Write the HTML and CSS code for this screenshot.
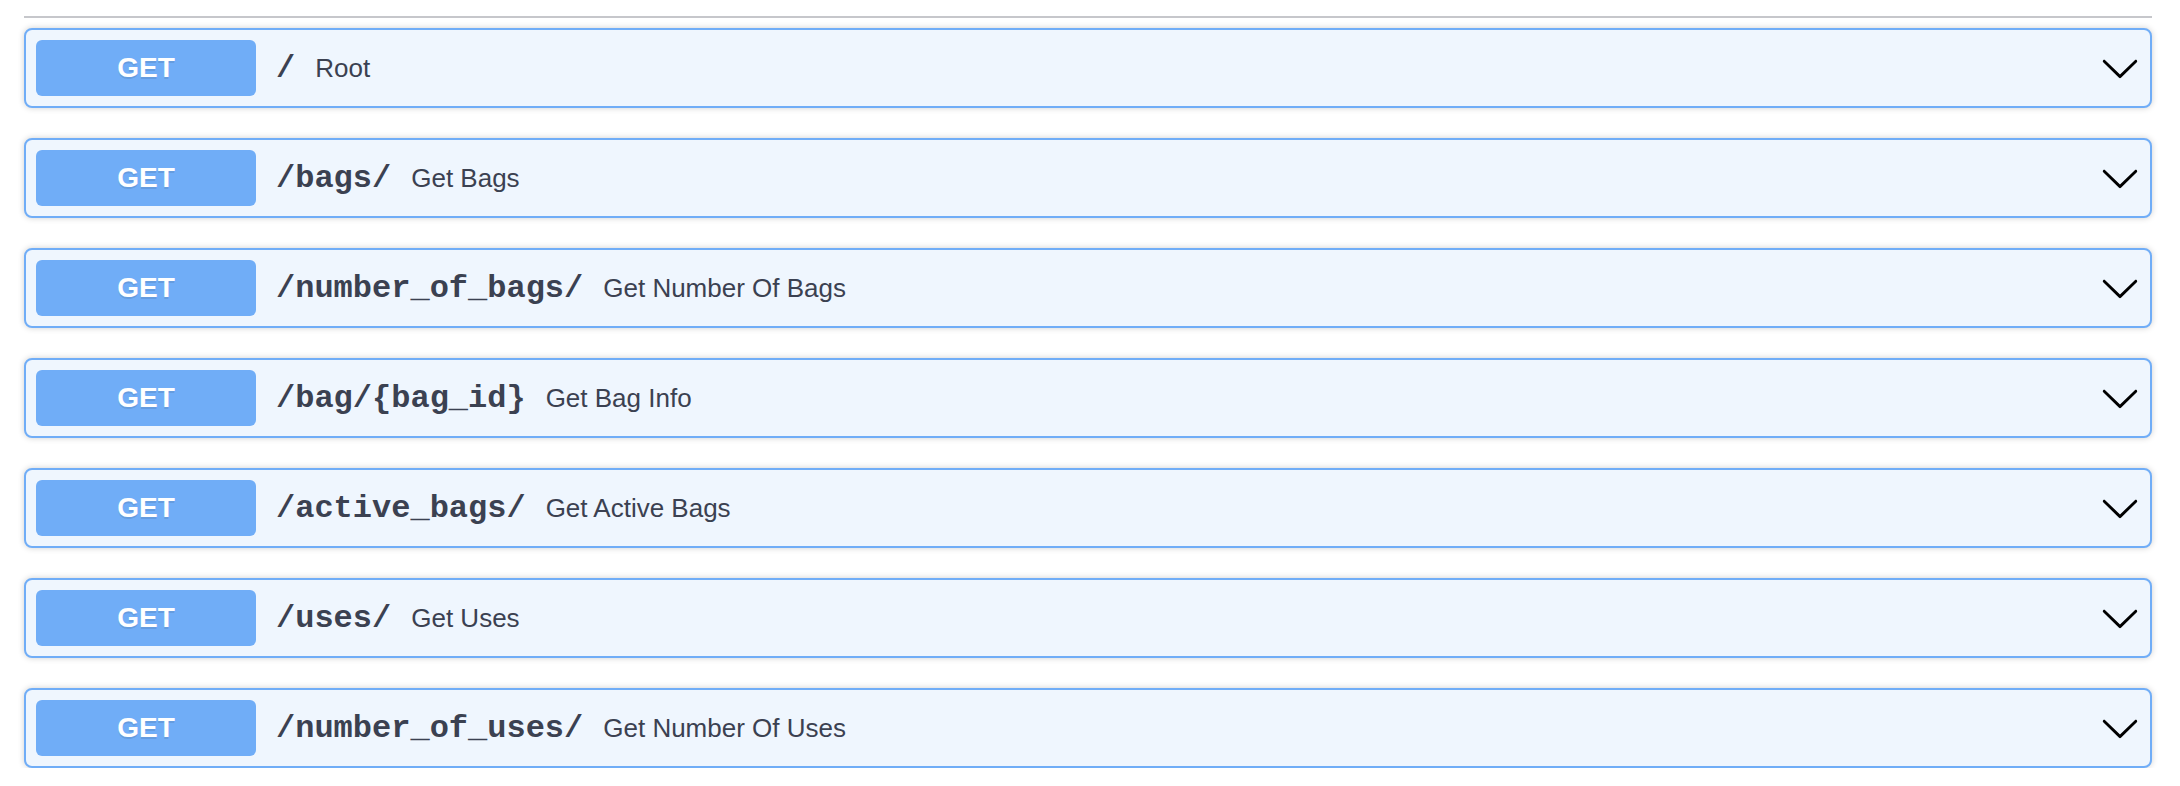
FILE: index.html
```html
<!DOCTYPE html>
<html lang="en">
<head>
<meta charset="utf-8">
<title>API operations</title>
<link rel="stylesheet" href="styles.css">
</head>
<body>
<div class="wrapper">
  <div class="divider"></div>
  <div class="ops">
    <div class="opblock">
      <span class="method">GET</span>
      <span class="path">/</span>
      <span class="desc">Root</span>
      <svg class="arrow" viewBox="0 0 20 20"><path d="M17.418 6.109c.272-.268.709-.268.979 0s.271.701 0 .969l-7.908 7.83c-.27.268-.707.268-.979 0l-7.908-7.83c-.27-.268-.27-.701 0-.969.271-.268.709-.268.979 0L10 13.25l7.418-7.141z"/></svg>
    </div>
    <div class="opblock">
      <span class="method">GET</span>
      <span class="path">/bags/</span>
      <span class="desc">Get Bags</span>
      <svg class="arrow" viewBox="0 0 20 20"><path d="M17.418 6.109c.272-.268.709-.268.979 0s.271.701 0 .969l-7.908 7.830c-.27.268-.707.268-.979 0l-7.908-7.830c-.27-.268-.27-.701 0-.969.271-.268.709-.268.979 0L10 13.25l7.418-7.141z"/></svg>
    </div>
    <div class="opblock">
      <span class="method">GET</span>
      <span class="path">/number_of_bags/</span>
      <span class="desc">Get Number Of Bags</span>
      <svg class="arrow" viewBox="0 0 20 20"><path d="M17.418 6.109c.272-.268.709-.268.979 0s.271.701 0 .969l-7.908 7.83c-.27.268-.707.268-.979 0l-7.908-7.83c-.27-.268-.27-.701 0-.969.271-.268.709-.268.979 0L10 13.25l7.418-7.141z"/></svg>
    </div>
    <div class="opblock">
      <span class="method">GET</span>
      <span class="path">/bag/{bag_id}</span>
      <span class="desc">Get Bag Info</span>
      <svg class="arrow" viewBox="0 0 20 20"><path d="M17.418 6.109c.272-.268.709-.268.979 0s.271.701 0 .969l-7.908 7.83c-.27.268-.707.268-.979 0l-7.908-7.83c-.27-.268-.27-.701 0-.969.271-.268.709-.268.979 0L10 13.25l7.418-7.141z"/></svg>
    </div>
    <div class="opblock">
      <span class="method">GET</span>
      <span class="path">/active_bags/</span>
      <span class="desc">Get Active Bags</span>
      <svg class="arrow" viewBox="0 0 20 20"><path d="M17.418 6.109c.272-.268.709-.268.979 0s.271.701 0 .969l-7.908 7.83c-.27.268-.707.268-.979 0l-7.908-7.83c-.27-.268-.27-.701 0-.969.271-.268.709-.268.979 0L10 13.25l7.418-7.141z"/></svg>
    </div>
    <div class="opblock">
      <span class="method">GET</span>
      <span class="path">/uses/</span>
      <span class="desc">Get Uses</span>
      <svg class="arrow" viewBox="0 0 20 20"><path d="M17.418 6.109c.272-.268.709-.268.979 0s.271.701 0 .969l-7.908 7.83c-.27.268-.707.268-.979 0l-7.908-7.83c-.27-.268-.27-.701 0-.969.271-.268.709-.268.979 0L10 13.25l7.418-7.141z"/></svg>
    </div>
    <div class="opblock">
      <span class="method">GET</span>
      <span class="path">/number_of_uses/</span>
      <span class="desc">Get Number Of Uses</span>
      <svg class="arrow" viewBox="0 0 20 20"><path d="M17.418 6.109c.272-.268.709-.268.979 0s.271.701 0 .969l-7.908 7.83c-.27.268-.707.268-.979 0l-7.908-7.83c-.27-.268-.27-.701 0-.969.271-.268.709-.268.979 0L10 13.25l7.418-7.141z"/></svg>
    </div>
  </div>
</div>
</body>
</html>
```

FILE: styles.css
```css
html, body {
  margin: 0;
  padding: 0;
  background: #ffffff;
}

body {
  font-family: "Liberation Sans", Arial, sans-serif;
  color: #3b4151;
}

.wrapper {
  padding: 16px 28px 0 24px;
}

.divider {
  height: 2px;
  background: #c6c7cb;
  margin-bottom: 10px;
}

.ops {
  display: flex;
  flex-direction: column;
  gap: 30px;
}

.opblock {
  box-sizing: border-box;
  height: 80px;
  display: flex;
  align-items: center;
  padding: 0 10px;
  border: 2px solid #70adf7;
  border-radius: 8px;
  background: #eff6fe;
  box-shadow: 0 0 6px rgba(0, 0, 0, 0.19);
}

.method {
  flex: 0 0 auto;
  width: 220px;
  height: 56px;
  display: flex;
  align-items: center;
  justify-content: center;
  background: #70adf7;
  border-radius: 6px;
  color: #ffffff;
  font-family: "Liberation Sans", Arial, sans-serif;
  font-weight: 700;
  font-size: 28px;
  text-shadow: 0 2px 0 rgba(0, 0, 0, 0.1);
}

.path {
  flex: 0 0 auto;
  padding: 0 20px;
  font-family: "Liberation Mono", "Courier New", monospace;
  font-weight: 700;
  font-size: 32px;
  color: #3b4151;
}

.desc {
  flex: 1 1 auto;
  font-size: 26px;
  color: #3b4151;
}

.arrow {
  flex: 0 0 auto;
  width: 40px;
  height: 40px;
  fill: #000000;
}
```
